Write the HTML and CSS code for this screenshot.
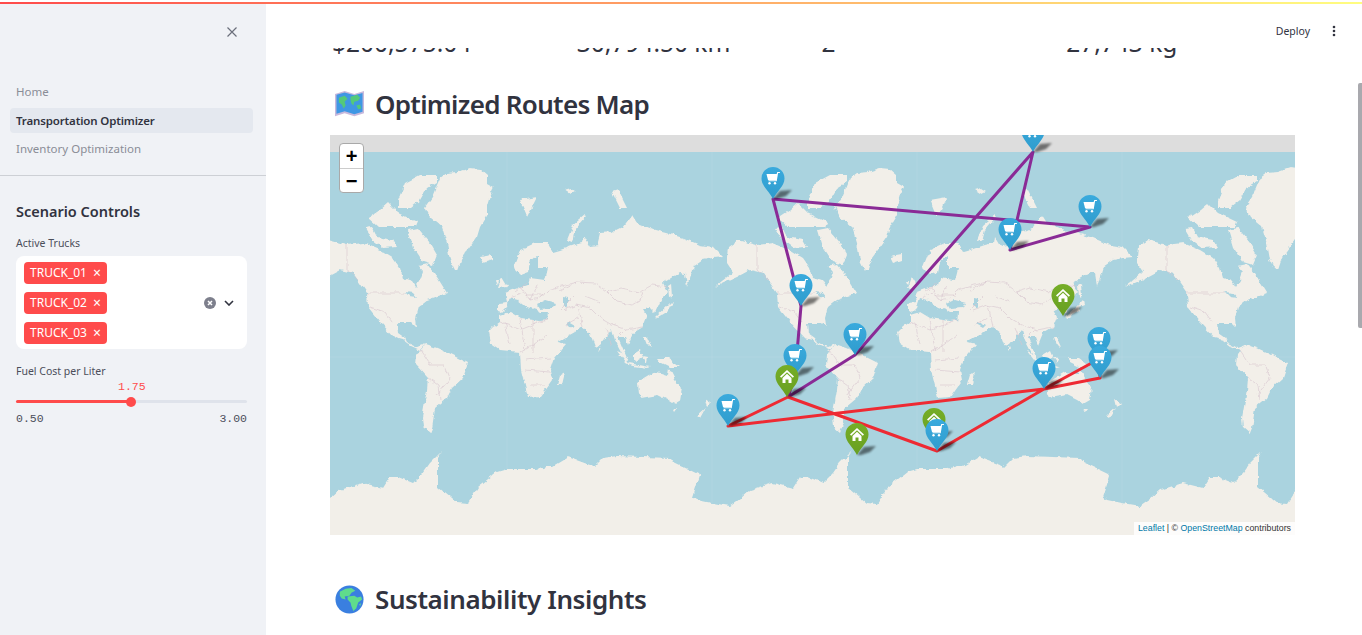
FILE: index.html
```html
<!DOCTYPE html>
<html lang="en">
<head>
<meta charset="utf-8">
<title>Transportation Optimizer</title>
<link rel="stylesheet" href="styles.css">
</head>
<body>
<div class="app">
  <div class="topline"><div class="decoration"></div></div>
  <div class="shell">
    <aside class="sidebar">
      <div class="side-head">
        <svg class="close" viewBox="0 0 12 12"><path d="M1.5 1.5l9 9M10.5 1.5l-9 9"/></svg>
      </div>
      <nav class="nav">
        <a class="nav-item">Home</a>
        <a class="nav-item active">Transportation Optimizer</a>
        <a class="nav-item">Inventory Optimization</a>
      </nav>
      <hr class="divider">
      <section class="controls">
        <h2 class="controls-title">Scenario Controls</h2>
        <label class="field-label">Active Trucks</label>
        <div class="multiselect">
          <div class="tags">
            <span class="tag">TRUCK_01<span class="tag-x">×</span></span>
            <span class="tag">TRUCK_02<span class="tag-x">×</span></span>
            <span class="tag">TRUCK_03<span class="tag-x">×</span></span>
          </div>
          <div class="ms-actions">
            <svg class="clear" viewBox="0 0 12 12"><circle cx="6" cy="6" r="6"/><path d="M4 4l4 4M8 4l-4 4"/></svg>
            <svg class="chev" viewBox="0 0 10 6"><path d="M1 1l4 4 4-4"/></svg>
          </div>
        </div>
        <label class="field-label fuel-label">Fuel Cost per Liter</label>
        <div class="slider">
          <div class="slider-value">1.75</div>
          <div class="track"><div class="fill"></div><div class="thumb"></div></div>
          <div class="slider-ends"><span>0.50</span><span>3.00</span></div>
        </div>
      </section>
    </aside>
    <main class="main">
      <header class="toolbar">
        <span class="deploy">Deploy</span>
        <svg class="kebab" viewBox="0 0 4 12"><circle cx="2" cy="2" r="1.3"/><circle cx="2" cy="6" r="1.3"/><circle cx="2" cy="10" r="1.3"/></svg>
      </header>
      <div class="metrics">
        <div class="metric">$200,575.04</div>
        <div class="metric">30,794.50 km</div>
        <div class="metric">2</div>
        <div class="metric">27,743 kg</div>
      </div>
      <h1 class="heading first">
        <svg class="emoji" viewBox="0 0 30 26">
          <path class="em-frame" d="M0 3l10-3 10 3 10-3v23l-10 3-10-3-10 3z"/>
          <path class="em-sea" d="M1.5 4l8.500-2.500 10 3 8.500-2.500v19.500l-8.500 2.500-10-3-8.500 2.500z"/>
          <path class="em-land" d="M4 7l6-2 3 3-3 3 1 4-2 3-2-4-3-2zM16 6l7-2 3 3-2 3-4 1-1 4-2-2-1-4zM22 15l4-1 1 4-3 1z"/>
        </svg>
        Optimized Routes Map
      </h1>
      <div class="map">
        <svg class="map-svg" viewBox="330 135 965 400" preserveAspectRatio="none">
          <defs>
            <linearGradient id="gb" x1="0" y1="0" x2="0" y2="1"><stop offset="0" stop-color="#3aaadd"/><stop offset="1" stop-color="#2f9ccd"/></linearGradient>
            <linearGradient id="gg" x1="0" y1="0" x2="0" y2="1"><stop offset="0" stop-color="#76ae27"/><stop offset="1" stop-color="#689f22"/></linearGradient>
            <filter id="soft" x="0" y="0" width="100%" height="100%" filterUnits="objectBoundingBox">
              <feTurbulence type="fractalNoise" baseFrequency="0.14" numOctaves="3" seed="4" result="n"/>
              <feDisplacementMap in="SourceGraphic" in2="n" scale="5" xChannelSelector="R" yChannelSelector="G"/>
              <feGaussianBlur stdDeviation="0.4"/>
            </filter>
            <filter id="sh" x="-50%" y="-50%" width="200%" height="200%"><feGaussianBlur stdDeviation="1.2"/></filter>
            <g id="world">
              <path class="land" d="M440 178L447 173 458 172 470 168 480 169 487 175 487 183 494 187 490 195 487 205 487 215 480 227 477 237 470 247 462 258 458 270 455 270 450 260 447 243 442 227 430 217 425 207 432 197 437 185Z"/>
              <path class="land" d="M398 200L405 183 420 175 437 175 437 182 427 188 420 200 410 208 398 208ZM408 230L418 228 430 243 437 255 433 265 423 262 413 247ZM365 228L372 227 377 237 393 240 397 247 383 248 372 240ZM368 218L380 210 388 203 398 213 417 222 415 227 397 227 378 227Z"/>
              <path class="land" d="M317 257L318 247 328 240 347 245 363 243 380 250 393 258 400 268 403 278 412 281 416 287 420 280 423 272 418 266 427 264 437 277 447 293 427 300 418 307 415 318 416 327 412 323 397 323 398 333 405 338 407 342 417 347 425 344 420 350 411 346 403 340 395 338 380 322 368 307 367 293 353 273 340 270 327 277 305 287 323 272 317 263Z"/>
              <path class="land" d="M425 344L437 348 448 353 468 363 463 378 452 388 447 398 435 408 432 428 430 433 423 427 422 418 427 390 428 378 416 365 417 355Z"/>
              <path class="land" d="M500 322L493 327 488 332 490 343 500 350 520 352 521 370 528 398 540 397 552 380 550 370 554 358 566 344 558 342 547 320 540 321 520 318 510 312 500 315Z"/>
              <path class="land" d="M557 385L560 375 565 372 562 385Z"/>
              <path class="land" d="M498 312L498 303 507 302 505 293 513 290 522 287 528 285 530 278 545 280 548 268 538 268 538 255 530 262 528 272 520 275 513 268 520 250 535 243 548 243 553 252 560 250 575 245 583 243 584 236 590 246 597 245 600 233 613 232 623 227 632 215 637 223 655 230 667 233 683 238 700 245 713 247 723 257 713 258 703 260 693 267 687 287 685 273 680 272 668 280 663 283 668 292 660 302 655 313 650 308 643 310 647 317 643 327 633 333 628 345 625 337 618 337 627 358 625 359 615 340 612 330 600 345 595 347 590 333 582 327 575 332 557 342 547 323 548 312 540 312 537 310 527 307 518 300 510 298 507 307 501 313Z"/>
              <path class="sea" d="M537 304L545 300 556 303 553 308 540 309ZM563 297L568 298 568 308 563 305ZM405 292L413 293 417 298 410 297ZM568 322L575 326 573 328 566 324Z"/>
              <path class="land" d="M502 277L508 287 498 288ZM480 257L492 255 492 260 483 263ZM520 200L537 197 527 217ZM612 192L618 190 627 208 620 208ZM567 240L573 225 585 215 586 217 575 230 572 242ZM496 281L499 281 498 285ZM564 190l7-2 5 3-6 3z"/>
              <path class="land" d="M655 317L668 305 670 310 657 318ZM668 306L673 301 674 305 669 307ZM668 285L671 283 672 297 669 298ZM644 337L647 337 652 348 647 345ZM632 355L640 350 643 357 635 362ZM617 351L622 353 630 365 626 363ZM628 363L650 367 647 368 628 365ZM643 357L648 358 647 363ZM657 358L668 358 680 367 670 367 660 362ZM599 347L601 348 599 351Z"/>
              <path class="land" d="M637 383L647 377 655 372 662 373 668 375 669 368 675 380 682 388 680 400 673 404 667 400 657 395 640 398 638 393ZM672 408L677 408 674 412ZM705 399L711 403 707 407ZM697 415L705 408 700 417Z"/>
              <path class="land" d="M302 503L320 506 330 499 340 490 363 483 383 488 390 477 398 477 413 483 423 473 430 463 442 451 438 457 438 487 457 503 467 504 478 487 497 472 507 469 537 469 547 466 553 466 568 457 590 465 593 468 603 458 617 456 670 458 673 462 700 475 693 497 697 500 712 503 712 562 302 562Z"/>
              <path class="border" d="M367 293H405M347 245V270L358 280M560 290L577 282 595 283 607 292 620 288 640 292 652 285 668 287M607 292L617 302 632 305 640 300 643 292M577 305L590 308 600 318 612 325 627 330 643 327M578 305L583 327M563 310L577 305M565 325L578 318M520 287L530 300 540 298 548 290 565 285 577 282M515 292L527 283M525 295L545 295M530 300L537 285M510 298L523 293M500 322L520 330 540 322 547 320M505 322L510 345M520 318L525 350M533 320L533 352M547 335L533 345 521 352M525 360L550 358M525 370L550 372M530 385L545 385M420 350L430 365 445 365 450 378 437 395M428 378L438 385 440 400M370 307L385 312 392 322M615 340L625 330M605 328L612 345M575 295L560 310M585 296L600 302"/>
            </g>
            <g id="shadow"><path class="pin-shadow" d="M0 0L7-8 19-9 13-3 4 0Z" filter="url(#sh)"/></g>
            <g id="cart"><path class="cart-body" d="M-6.500-5H4L3 1H-5ZM3.500-4.500L4.300-7H7L6.800-6H5.100L3.700 2.300H-4.500V1.300H2.800"/><circle class="cart-body" cx="-3.500" cy="4.200" r="1.200"/><circle class="cart-body" cx="2" cy="4.200" r="1.200"/></g>
            <g id="house"><path class="cart-body" d="M0-7L7-.5 5.800 .700 0-4.700-5.800 .700-7-.5ZM-4.500 1L0-3.200 4.500 1V6H1.500V2.500H-1.500V6H-4.500Z"/></g>
            <g id="pin-blue"><use href="#shadow"/><path fill="url(#gb)" d="M0 0C-4-8-11.500-13-11.500-20.500A11.500 11.500 0 1 1 11.500-20.500C11.500-13 4-8 0 0Z"/><use href="#cart" y="-20"/></g>
            <g id="pin-green"><use href="#shadow"/><path fill="url(#gg)" d="M0 0C-4-8-11.500-13-11.500-20.500A11.500 11.500 0 1 1 11.500-20.500C11.500-13 4-8 0 0Z"/><use href="#house" y="-20"/></g>
          </defs>
          <rect class="map-sea" x="330" y="152" width="965" height="410"/>
          <g filter="url(#soft)">
            <rect class="map-sea" x="330" y="152" width="965" height="410"/>
            <use href="#world"/>
            <use href="#world" x="410"/>
            <use href="#world" x="820"/>
          </g>
          <path class="seam" d="M507 152V535M712 152V535M917 152V535M1122 152V535M330 357H1295"/>
          <rect class="map-gray" x="330" y="135" width="965" height="17"/>
          <polyline class="route purple" points="788,397 855,355 1033,152 1010,250 1090,227 773,199 801,306 795,376 788,397"/>
          <polyline class="route red" points="788,397 937,451 1044,389 1099,359 1100,378 1044,389 728,426 788,397"/>
          <use href="#pin-blue" x="1033" y="152"/>
          <use href="#pin-blue" x="773" y="199"/>
          <use href="#pin-blue" x="1090" y="227"/>
          <use href="#pin-blue" x="1010" y="250"/>
          <use href="#pin-blue" x="801" y="306"/>
          <use href="#pin-green" x="1063" y="316"/>
          <use href="#pin-blue" x="855" y="355"/>
          <use href="#pin-blue" x="795" y="376"/>
          <use href="#pin-green" x="787" y="397"/>
          <use href="#pin-blue" x="728" y="426"/>
          <use href="#pin-green" x="857" y="455"/>
          <use href="#pin-green" x="934" y="440"/>
          <use href="#pin-blue" x="937" y="451"/>
          <use href="#pin-blue" x="1044" y="389"/>
          <use href="#pin-blue" x="1099" y="359"/>
          <use href="#pin-blue" x="1100" y="378"/>
        </svg>
        <div class="zoom">
          <button class="zoom-btn">+</button>
          <button class="zoom-btn">−</button>
        </div>
        <div class="attribution"><a>Leaflet</a> | © <a>OpenStreetMap</a> contributors</div>
      </div>
      <h1 class="heading second">
        <svg class="emoji" viewBox="0 0 30 30">
          <circle class="em-sea2" cx="15" cy="15" r="14.500"/>
          <path class="em-land2" d="M5 7l6-3 6-1 4 3-4 2-2 3-5 1 1 3-4-1-2-3zM13 12l7-1 3 2 4-1 1 3-4 3-2 6-3 3-2-5-1-4-3-3zM25 20l2-1-1 3z"/>
        </svg>
        Sustainability Insights
      </h1>
    </main>
  </div>
  <div class="scrollbar"></div>
</div>
</body>
</html>
```
FILE: styles.css
```css
* { box-sizing: border-box; }
html, body { margin: 0; height: 100%; overflow: hidden; }
body { font-family: "Noto Sans", sans-serif; color: #31333f; background: #fff; }

.app { display: flex; flex-direction: column; height: 100vh; position: relative; }
.topline { height: 4px; padding-top: 2px; flex: none; background: #fff; }
.decoration { height: 2px; background: linear-gradient(90deg, #ff4b4b, #fffd80); }
.shell { display: flex; flex: 1; min-height: 0; }

/* sidebar */
.sidebar { width: 266px; flex: none; background: #f0f2f6; }
.side-head { height: 72px; display: flex; justify-content: flex-end; padding: 22px 28px 0 0; }
.close { width: 12px; height: 12px; }
.close path { stroke: #6b6f7b; stroke-width: 1.200; fill: none; }
.nav { display: flex; flex-direction: column; gap: 3px; padding: 3px 13px 0 10px; }
.nav-item { height: 25px; line-height: 25px; padding-left: 6px; border-radius: 4px; font-size: 11.500px; color: #8a8d97; }
.nav-item.active { margin-top: 1px; background: #e4e8ef; color: #31333f; font-weight: 600; letter-spacing: -.15px; }
.divider { margin: 14px 0 0; border: 0; border-top: 1px solid #cdd0d5; }
.controls { padding: 0 19px 0 16px; }
.controls-title { margin: 25px 0 0; font-size: 14.500px; line-height: 20px; font-weight: 600; }
.field-label { display: block; margin-top: 14px; font-size: 10.500px; line-height: 16px; color: #4b4e5a; }
.multiselect { display: flex; align-items: center; margin-top: 5px; height: 93px; background: #fff; border-radius: 8px; padding: 0 11px 0 8px; }
.tags { display: flex; flex-direction: column; align-items: flex-start; gap: 8px; flex: 1; }
.tag { display: flex; align-items: center; justify-content: space-between; width: 83px; height: 22px; padding: 0 6px; background: #ff4b4b; color: #fff; border-radius: 4px; font-size: 12px; }
.tag-x { font-size: 14px; line-height: 14px; }
.ms-actions { display: flex; align-items: center; gap: 8px; }
.clear { width: 12px; height: 12px; }
.clear circle { fill: #7d7f8c; }
.clear path { stroke: #fff; stroke-width: 1.500; }
.chev { width: 10px; height: 6px; margin-right: 2px; }
.chev path { fill: none; stroke: #31333f; stroke-width: 1.600; }
.fuel-label { margin-top: 14px; }
.slider-value { padding-left: 102px; font-family: "Liberation Mono", monospace; font-size: 11.500px; line-height: 16px; color: #ff4b4b; }
.track { position: relative; height: 3px; margin-top: 5px; background: #dfe3eb; border-radius: 2px; }
.fill { width: 115px; height: 100%; background: #ff4b4b; border-radius: 2px; }
.thumb { position: absolute; left: 110px; top: -3px; width: 10px; height: 10px; border-radius: 50%; background: #ff4b4b; }
.slider-ends { display: flex; justify-content: space-between; margin-top: 8px; font-family: "Liberation Mono", monospace; font-size: 11.500px; line-height: 16px; color: #4b4e5a; }

/* main */
.main { flex: 1; min-width: 0; padding: 0 67px 0 64px; }
.toolbar { height: 44px; display: flex; align-items: center; justify-content: flex-end; margin-right: -41px; padding-top: 9px; gap: 22px; }
.deploy { font-size: 10.500px; color: #31333f; }
.kebab { width: 4px; height: 12px; }
.kebab circle { fill: #31333f; }
.metrics { display: grid; grid-template-columns: repeat(4, 1fr); grid-auto-rows: 10px; gap: 16px; height: 10px; overflow: hidden; align-items: end; padding-left: 2px; }
.metric { font-size: 24.500px; line-height: 30px; }
.heading { display: flex; align-items: center; gap: 11px; margin: 0; font-size: 26px; font-weight: 600; line-height: 36px; padding-left: 5px; color: #31333f; }
.heading.first { margin-top: 28px; letter-spacing: -.7px; }
.heading.second { margin-top: 46px; letter-spacing: -.42px; }
.emoji { width: 29px; flex: none; }
.em-frame { fill: #c8b9dc; }
.em-sea { fill: #3f97e4; }
.em-land { fill: #54c97a; }
.em-sea2 { fill: #3a7fe0; }
.em-land2 { fill: #5fdc8c; }

/* map */
.map { position: relative; height: 400px; margin-top: 13px; background: #ddd; overflow: hidden; }
.map-svg { display: block; width: 100%; height: 100%; }
.map-sea { fill: #aad3df; }
.map-gray { fill: #ddd; }
.land { fill: #f2efe9; }
.sea { fill: #aad3df; }
.border { fill: none; stroke: #d6c5cf; stroke-width: .6; }
.seam { fill: none; stroke: #fff; stroke-opacity: .08; stroke-width: 1; }
.route { fill: none; stroke-width: 3; stroke-linejoin: round; }
.purple { stroke: #8a2a96; }
.red { stroke: #ee2a33; }
.pin-shadow { fill: #000; fill-opacity: .5; }
.cart-body { fill: #fff; }
.zoom { position: absolute; left: 9px; top: 8px; width: 25px; border: 1px solid #a9a9a9; border-radius: 4px; background: #fff; display: flex; flex-direction: column; }
.zoom-btn { height: 24px; padding: 0; border: 0; background: none; font: 700 20px/22px "Liberation Sans", sans-serif; color: #000; }
.zoom-btn + .zoom-btn { border-top: 1px solid #ccc; }
.attribution { position: absolute; right: 0; bottom: 0; padding: 0 4px; height: 13px; background: rgba(255,255,255,.8); font: 8.800px/13px "Liberation Sans", sans-serif; color: #333; }
.attribution a { color: #0078a8; }
.scrollbar { position: absolute; right: 0; top: 83px; width: 4px; height: 245px; background: #a9a9ae; border-radius: 2px 0 0 2px; }
```
